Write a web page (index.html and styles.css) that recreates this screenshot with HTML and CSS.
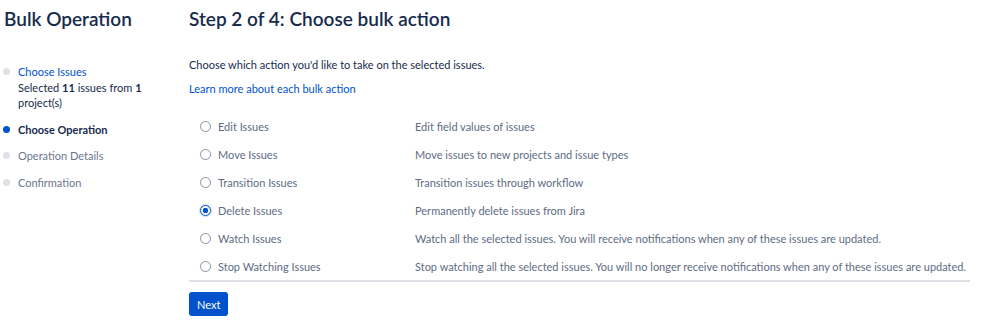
FILE: index.html
```html
<!DOCTYPE html>
<html>
<head>
<meta charset="utf-8">
<link rel="stylesheet" href="styles.css">
</head>
<body>
<div class="page">
  <aside class="sidebar">
    <h1 class="side-title">Bulk Operation</h1>
    <ul class="steps">
      <li class="step done">
        <span class="dot"></span>
        <div class="step-body">
          <a class="step-link">Choose Issues</a>
          <div class="step-sub">Selected <b>11</b> issues from <b>1</b> project(s)</div>
        </div>
      </li>
      <li class="step active"><span class="dot"></span><div class="step-body">Choose Operation</div></li>
      <li class="step"><span class="dot"></span><div class="step-body">Operation Details</div></li>
      <li class="step"><span class="dot"></span><div class="step-body">Confirmation</div></li>
    </ul>
  </aside>
  <main class="main">
    <h2 class="main-title">Step 2 of 4: Choose bulk action</h2>
    <p class="intro">Choose which action you'd like to take on the selected issues.</p>
    <a class="learn">Learn more about each bulk action</a>
    <div class="options">
      <div class="opt"><span class="radio"></span><span class="label">Edit Issues</span><span class="desc">Edit field values of issues</span></div>
      <div class="opt"><span class="radio"></span><span class="label">Move Issues</span><span class="desc">Move issues to new projects and issue types</span></div>
      <div class="opt"><span class="radio"></span><span class="label">Transition Issues</span><span class="desc">Transition issues through workflow</span></div>
      <div class="opt"><span class="radio checked"></span><span class="label">Delete Issues</span><span class="desc">Permanently delete issues from Jira</span></div>
      <div class="opt"><span class="radio"></span><span class="label">Watch Issues</span><span class="desc">Watch all the selected issues. You will receive notifications when any of these issues are updated.</span></div>
      <div class="opt"><span class="radio"></span><span class="label">Stop Watching Issues</span><span class="desc">Stop watching all the selected issues. You will no longer receive notifications when any of these issues are updated.</span></div>
    </div>
    <button class="next">Next</button>
  </main>
</div>
</body>
</html>
```
FILE: styles.css
```css
* { box-sizing: border-box; }
html, body { margin: 0; padding: 0; background: #fff; }
body { font-family: "Lato", "Liberation Sans", sans-serif; font-size: 11px; color: #172b4d; }
.page { display: flex; }
.sidebar { width: 189px; padding: 8px 0 0 4px; flex: none; }
.side-title { margin: 0; font-size: 19px; font-weight: 600; line-height: 22px; color: #172b4d; }
.steps { list-style: none; margin: 34px 0 0 -1px; padding: 0; }
.step { display: flex; align-items: flex-start; margin-bottom: 11px; color: #6b778c; line-height: 15.5px; }
.step-body { max-width: 130px; }
.dot { width: 7px; height: 7px; border-radius: 50%; background: #dfe1e6; margin: 4px 8px 0 0; flex: none; }
.step.active .dot { background: #0052cc; }
.step.active .step-body { color: #172b4d; font-weight: 700; }
.step-link { color: #0052cc; }
.step-sub { color: #172b4d; }
.step-sub b { font-weight: 700; }
.main { flex: 1; padding: 8px 28px 0 0; }
.main-title { margin: 0; font-size: 19px; font-weight: 600; line-height: 22px; color: #172b4d; }
.intro { margin: 27px 0 0; line-height: 16px; color: #172b4d; }
.learn { display: block; margin-top: 8px; color: #0052cc; line-height: 16px; }
.options { margin-top: 15px; border-bottom: 2px solid #dfe1e6; }
.opt { display: flex; align-items: center; height: 28px; color: #5e6c84; }
.radio { width: 11px; height: 11px; border: 1px solid #8993a4; border-radius: 50%; margin: 0 7px 0 11px; flex: none; }
.radio.checked { border: 1px solid #0052cc; background: radial-gradient(circle, #0052cc 0 2.5px, #fff 3px); box-shadow: 0 0 0 1px #4c9aff55; }
.label { width: 197px; flex: none; }
.desc { flex: 1; }
.next { margin-top: 10px; background: #0052cc; color: #fff; border: none; border-radius: 3px; height: 24px; padding: 0 8px; font: inherit; font-size: 11px; }
```
